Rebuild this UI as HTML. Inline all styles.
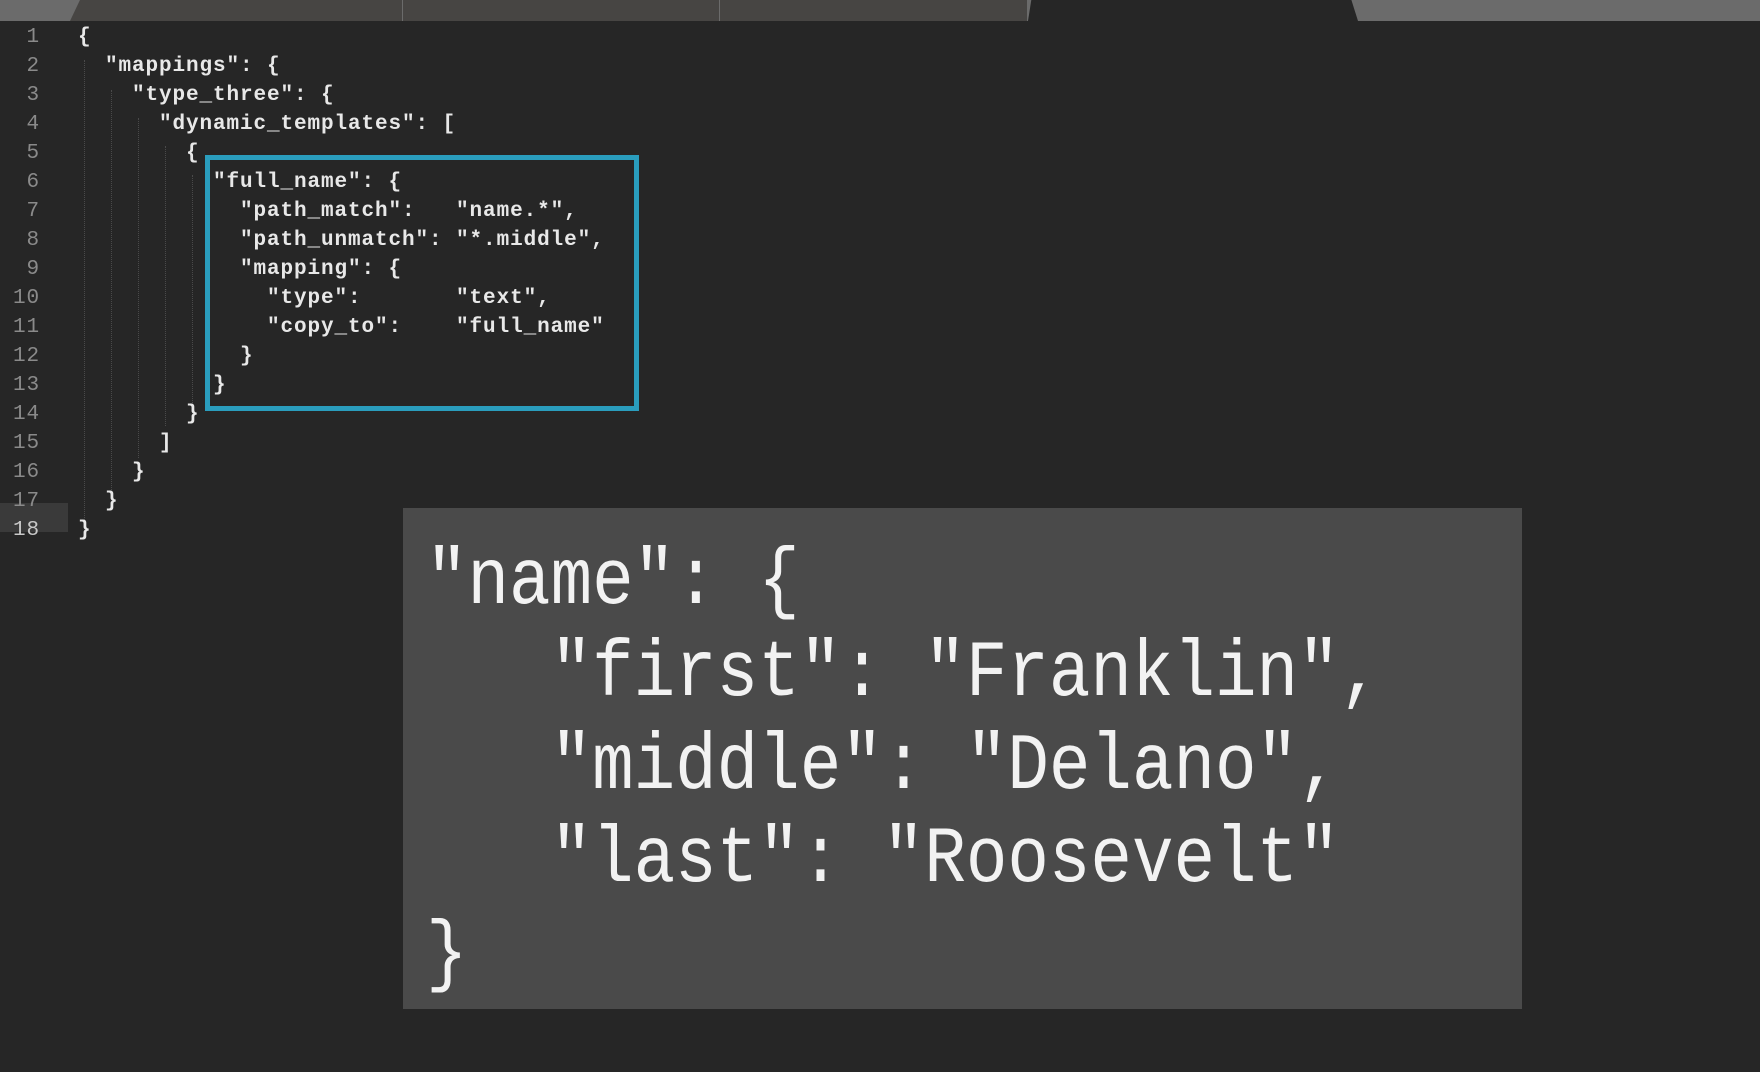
<!DOCTYPE html>
<html><head><meta charset="utf-8"><style>
html,body{margin:0;padding:0;width:1760px;height:1072px;overflow:hidden;background:#262626;}
.bar{position:absolute;left:0;top:0;width:1760px;height:21px;background:#6b6b6b;}
.tab{position:absolute;top:0;height:21px;background:#474543;}
.code{position:absolute;left:0;top:23px;font-family:"Liberation Mono",monospace;font-size:21px;font-weight:bold;color:#e8e8e8;letter-spacing:0.9px;}
.ln{position:absolute;height:29px;line-height:29px;white-space:pre;}
.num{position:absolute;left:0;width:40px;text-align:right;color:#8a8a8a;font-weight:normal;height:29px;line-height:29px;}
.hl{position:absolute;left:0;top:503px;width:68px;height:29px;background:#3a3a3a;}
.blue{position:absolute;left:205px;top:155px;width:424px;height:246px;border:5px solid #2a9dbd;}
.big{position:absolute;left:403px;top:508px;width:1119px;height:501px;background:#4a4a4a;}
.bt{position:absolute;font-family:"Liberation Mono",monospace;font-size:80px;color:#f2f2f2;white-space:pre;line-height:93px;transform:scaleX(0.865);transform-origin:0 0;}
.guide{position:absolute;width:0;border-left:1px dotted #4a4a4a;}
</style></head><body>
<div class="bar"></div>
<div class="tab" style="left:70px;width:332px;clip-path:polygon(0 100%,3% 0,100% 0,100% 100%)"></div>
<div class="tab" style="left:403px;width:316px"></div>
<div class="tab" style="left:720px;width:307px"></div>
<div class="tab" style="left:1028px;width:330px;background:#262626;clip-path:polygon(0 100%,1% 0,98% 0,100% 100%)"></div>
<div class="hl"></div>
<div class="guide" style="left:84px;top:60px;height:460px"></div>
<div class="guide" style="left:111px;top:90px;height:400px"></div>
<div class="guide" style="left:138px;top:118px;height:340px"></div>
<div class="guide" style="left:165px;top:146px;height:280px"></div>
<div class="guide" style="left:192px;top:175px;height:230px"></div>
<div class="code">
<div class="num" style="top:0">1</div><div class="num" style="top:29px">2</div><div class="num" style="top:58px">3</div><div class="num" style="top:87px">4</div><div class="num" style="top:116px">5</div><div class="num" style="top:145px">6</div><div class="num" style="top:174px">7</div><div class="num" style="top:203px">8</div><div class="num" style="top:232px">9</div><div class="num" style="top:261px">10</div><div class="num" style="top:290px">11</div><div class="num" style="top:319px">12</div><div class="num" style="top:348px">13</div><div class="num" style="top:377px">14</div><div class="num" style="top:406px">15</div><div class="num" style="top:435px">16</div><div class="num" style="top:464px">17</div><div class="num" style="top:493px;color:#c8c8c8">18</div>
<div class="ln" style="left:78px;top:0">{</div>
<div class="ln" style="left:78px;top:29px">  "mappings": {</div>
<div class="ln" style="left:78px;top:58px">    "type_three": {</div>
<div class="ln" style="left:78px;top:87px">      "dynamic_templates": [</div>
<div class="ln" style="left:78px;top:116px">        {</div>
<div class="ln" style="left:78px;top:145px">          "full_name": {</div>
<div class="ln" style="left:78px;top:174px">            "path_match":   "name.*",</div>
<div class="ln" style="left:78px;top:203px">            "path_unmatch": "*.middle",</div>
<div class="ln" style="left:78px;top:232px">            "mapping": {</div>
<div class="ln" style="left:78px;top:261px">              "type":       "text",</div>
<div class="ln" style="left:78px;top:290px">              "copy_to":    "full_name"</div>
<div class="ln" style="left:78px;top:319px">            }</div>
<div class="ln" style="left:78px;top:348px">          }</div>
<div class="ln" style="left:78px;top:377px">        }</div>
<div class="ln" style="left:78px;top:406px">      ]</div>
<div class="ln" style="left:78px;top:435px">    }</div>
<div class="ln" style="left:78px;top:464px">  }</div>
<div class="ln" style="left:78px;top:493px">}</div>
</div>
<div class="blue"></div>
<div class="big"></div>
<div class="bt" style="left:426px;top:536px">"name": {</div>
<div class="bt" style="left:426px;top:628px">   "first": "Franklin",</div>
<div class="bt" style="left:426px;top:721px">   "middle": "Delano",</div>
<div class="bt" style="left:426px;top:814px">   "last": "Roosevelt"</div>
<div class="bt" style="left:426px;top:909px">}</div>
</body></html>
